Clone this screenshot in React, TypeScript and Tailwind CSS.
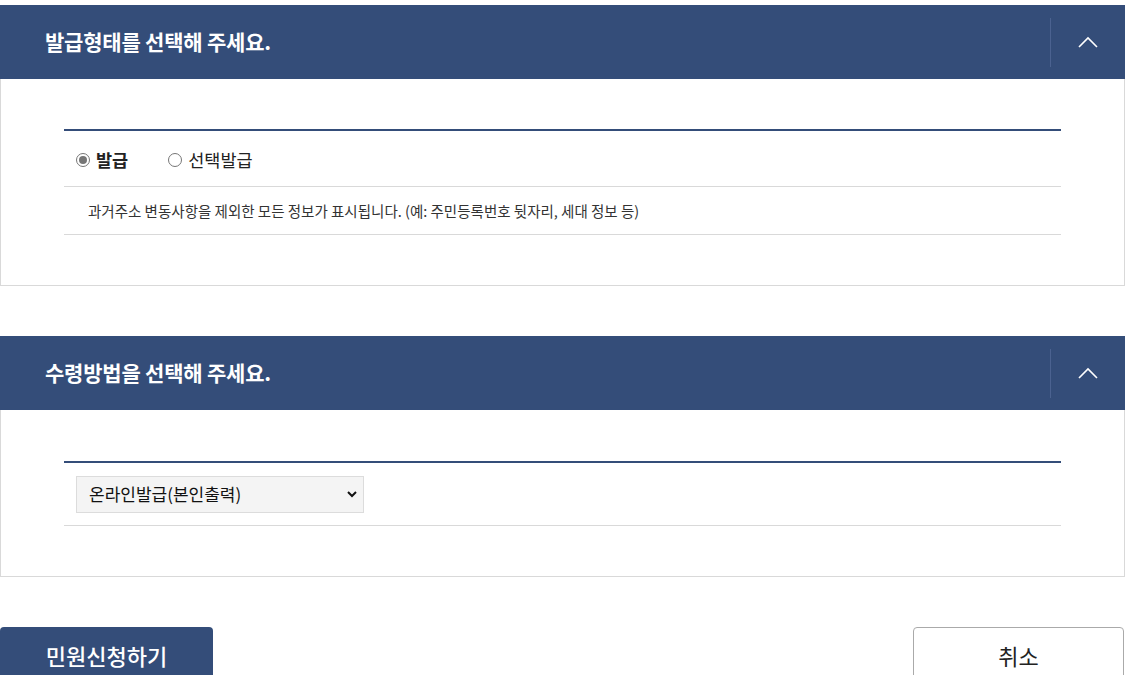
import type { ReactNode } from 'react'

const font = { fontFamily: '"Noto Sans CJK KR", "Noto Sans", sans-serif' }

function SectionHeader({ title }: { title: string }) {
  return (
    <header className="flex h-[74px] items-center bg-[#344d79]">
      <h2 className="flex-1 pl-[45px] text-[21px] font-bold tracking-[-0.01em] text-white">{title}</h2>
      <div className="h-[49px] w-px bg-[#4b6290]" />
      <button type="button" className="flex h-full w-[74px] items-center justify-center" aria-label="접기">
        <svg width="20" height="12" viewBox="0 0 20 12" fill="none" stroke="white" strokeWidth="1.6">
          <path d="M1 11 L10 2 L19 11" />
        </svg>
      </button>
    </header>
  )
}

function Section({ title, top = 'pt-[50px]', children }: { title: string; top?: string; children: ReactNode }) {
  return (
    <section>
      <SectionHeader title={title} />
      <div className={`border-x border-b border-[#d9d9d9] px-[63px] pb-[50px] ${top}`}>
        <div className="border-t-2 border-[#344d79]">{children}</div>
      </div>
    </section>
  )
}

export default function App() {
  return (
    <div style={font} className="w-[1125px] pt-[5px] text-[#222]">
      <Section title="발급형태를 선택해 주세요.">
        <div className="flex h-[56px] items-center gap-[40px] border-b border-[#d9d9d9] pl-[12px] pt-[3px] text-[17.5px]">
          <label className="flex items-center gap-[6px] font-bold">
            <span className="flex h-[14px] w-[14px] items-center justify-center rounded-full border border-[#767676]">
              <span className="h-[8px] w-[8px] rounded-full bg-[#767676]" />
            </span>
            발급
          </label>
          <label className="flex items-center gap-[6px]">
            <span className="h-[14px] w-[14px] rounded-full border border-[#767676]" />
            선택발급
          </label>
        </div>
        <p className="flex h-[48px] items-center border-b border-[#d9d9d9] pl-[24px] text-[14.5px] text-[#333]">
          과거주소 변동사항을 제외한 모든 정보가 표시됩니다. (예: 주민등록번호 뒷자리, 세대 정보 등)
        </p>
      </Section>

      <div className="h-[50px]" />

      <Section title="수령방법을 선택해 주세요." top="pt-[51px]">
        <div className="flex h-[63px] items-center border-b border-[#d9d9d9] pl-[12px]">
          <div className="flex h-[37px] w-[288px] items-center justify-between border border-[#dcdcdc] bg-[#f4f4f4] pl-[12px] pr-[5px] text-[17px] text-[#111]">
            <span>온라인발급(본인출력)</span>
            <svg width="12" height="8" viewBox="0 0 12 8" fill="none" stroke="#111" strokeWidth="2">
              <path d="M2 2 L6 6 L10 2" />
            </svg>
          </div>
        </div>
      </Section>

      <div className="flex justify-between pt-[50px]">
        <button type="button" className="h-[60px] w-[213px] rounded-t-[4px] bg-[#344d79] pb-[3px] text-[22px] font-medium text-white">
          민원신청하기
        </button>
        <button type="button" className="mr-px h-[60px] w-[211px] rounded-t-[4px] border border-[#aaa] bg-white pb-[3px] text-[22px] text-[#222]">
          취소
        </button>
      </div>
    </div>
  )
}
